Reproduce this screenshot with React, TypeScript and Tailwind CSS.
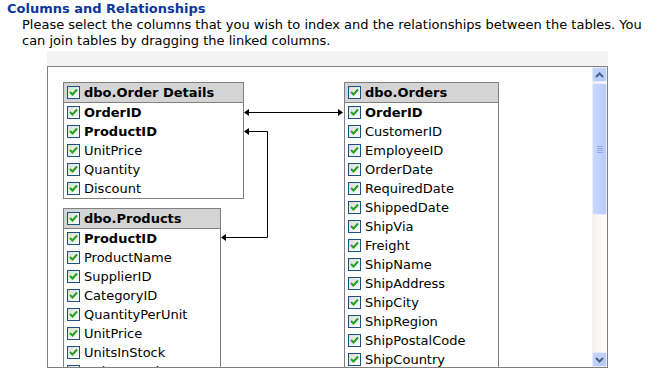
const orderDetails = [
  { name: "OrderID", key: true },
  { name: "ProductID", key: true },
  { name: "UnitPrice" },
  { name: "Quantity" },
  { name: "Discount" },
];

const orders = [
  { name: "OrderID", key: true },
  { name: "CustomerID" },
  { name: "EmployeeID" },
  { name: "OrderDate" },
  { name: "RequiredDate" },
  { name: "ShippedDate" },
  { name: "ShipVia" },
  { name: "Freight" },
  { name: "ShipName" },
  { name: "ShipAddress" },
  { name: "ShipCity" },
  { name: "ShipRegion" },
  { name: "ShipPostalCode" },
  { name: "ShipCountry" },
];

const products = [
  { name: "ProductID", key: true },
  { name: "ProductName" },
  { name: "SupplierID" },
  { name: "CategoryID" },
  { name: "QuantityPerUnit" },
  { name: "UnitPrice" },
  { name: "UnitsInStock" },
  { name: "UnitsOnOrder" },
  { name: "ReorderLevel" },
  { name: "Discontinued" },
];

type Col = { name: string; key?: boolean };

function Check() {
  return (
    <span className="flex h-[13px] w-[13px] shrink-0 items-center justify-center border border-[#1c5180] bg-gradient-to-br from-[#dcdcd5] to-white">
      <svg width="9" height="9" viewBox="0 0 9 9">
        <path d="M1 4 L3.5 6.5 L8 1.5" fill="none" stroke="#21a121" strokeWidth="2" />
      </svg>
    </span>
  );
}

function TableBox({ title, cols, className }: { title: string; cols: Col[]; className: string }) {
  return (
    <div className={"absolute border border-[#808080] bg-white " + className}>
      <div className="flex h-[20px] items-center gap-[4px] border-b border-[#808080] bg-[#d4d4d4] pl-[3px] text-[13px] font-bold">
        <Check />
        <span>{title}</span>
      </div>
      {cols.map((c) => (
        <div key={c.name} className="flex h-[19px] items-center gap-[4px] pl-[3px] text-[13px]">
          <Check />
          <span className={c.key ? "font-bold" : ""}>{c.name}</span>
        </div>
      ))}
    </div>
  );
}

function Chevron({ up }: { up?: boolean }) {
  return (
    <svg width="9" height="6" viewBox="0 0 9 6">
      <path
        d={up ? "M1 5 L4.5 1.5 L8 5" : "M1 1 L4.5 4.5 L8 1"}
        fill="none"
        stroke="#4d6185"
        strokeWidth="2"
      />
    </svg>
  );
}

export default function App() {
  return (
    <div
      className="h-[374px] w-[663px] overflow-hidden bg-white text-black"
      style={{ fontFamily: '"DejaVu Sans", Verdana, sans-serif' }}
    >
      <h2 className="pl-[7px] pt-[1px] text-[13px] font-bold leading-[16px] text-[#0b3699]">
        Columns and Relationships
      </h2>
      <p className="ml-[22px] w-[640px] text-[13px] leading-[16px]">
        Please select the columns that you wish to index and the relationships between the tables. You can join
        tables by dragging the linked columns.
      </p>

      <div className="ml-[47px] mt-[2px] h-[15px] w-[561px] bg-[#f3f3f3]" />
      <div className="ml-[47px] flex h-[302px] w-[561px] border border-[#808080]">
        {/* canvas */}
        <div className="relative flex-1 overflow-hidden">
          <TableBox title="dbo.Order Details" cols={orderDetails} className="left-[15px] top-[15px] w-[181px]" />
          <TableBox title="dbo.Orders" cols={orders} className="left-[296px] top-[15px] w-[155px]" />
          <TableBox title="dbo.Products" cols={products} className="left-[15px] top-[141px] w-[158px]" />

          <svg className="absolute left-0 top-0" width="544" height="300">
            <path d="M197 45.5 H294" stroke="black" strokeWidth="1" />
            <path d="M196 45.5 L201 42 L201 49 Z" fill="black" />
            <path d="M295 45.5 L290 42 L290 49 Z" fill="black" />
            <path d="M197 64.5 H219.5 V170.5 H174" fill="none" stroke="black" strokeWidth="1" />
            <path d="M196 64.5 L201 61 L201 68 Z" fill="black" />
            <path d="M173 170.5 L178 167 L178 174 Z" fill="black" />
          </svg>
        </div>

        {/* scrollbar */}
        <div className="flex w-[15px] flex-col bg-gradient-to-r from-[#f3f1ec] to-[#fefefb]">
          <div className="flex h-[15px] items-center justify-center rounded-[2px] border border-[#e4ebfd] bg-gradient-to-br from-[#c4d5fd] to-[#b6c9f8]">
            <Chevron up />
          </div>
          <div className="mt-[1px] flex h-[132px] items-center justify-center rounded-[2px] border border-[#e9eefc] bg-gradient-to-r from-[#c9d8fd] to-[#b9cbf9]">
            <div className="flex flex-col gap-[1px]">
              <div className="h-[1px] w-[6px] bg-[#8ca7ef]" />
              <div className="h-[1px] w-[6px] bg-[#8ca7ef]" />
              <div className="h-[1px] w-[6px] bg-[#8ca7ef]" />
              <div className="h-[1px] w-[6px] bg-[#8ca7ef]" />
            </div>
          </div>
          <div className="flex-1" />
          <div className="flex h-[15px] items-center justify-center rounded-[2px] border border-[#e4ebfd] bg-gradient-to-br from-[#c4d5fd] to-[#b6c9f8]">
            <Chevron />
          </div>
        </div>
      </div>
    </div>
  );
}
